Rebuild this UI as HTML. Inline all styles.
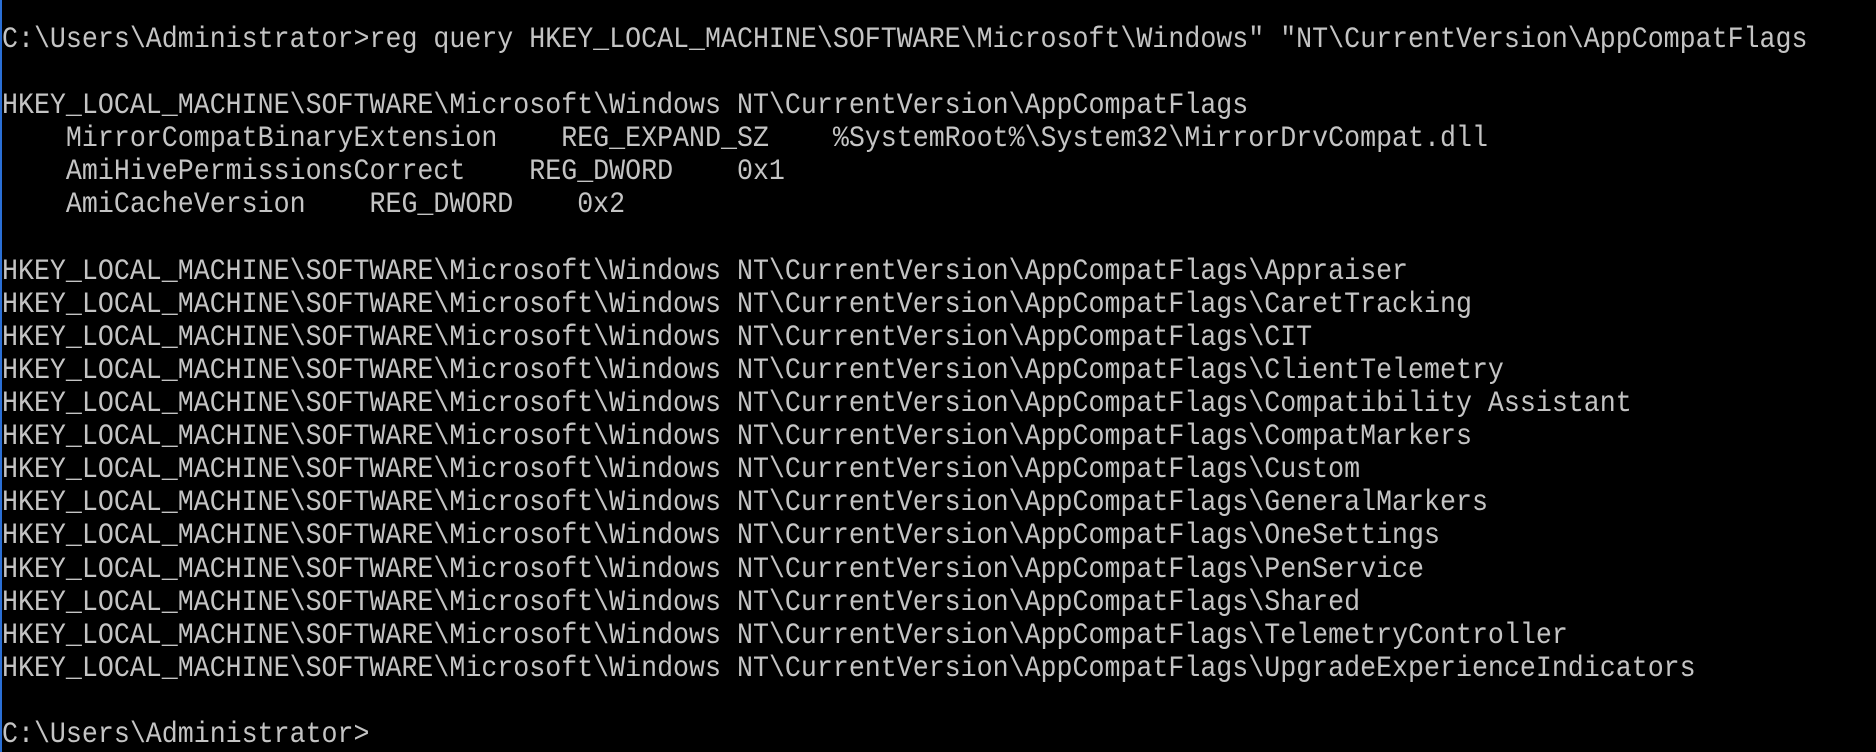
<!DOCTYPE html>
<html><head><meta charset="utf-8"><style>
html,body{margin:0;padding:0;background:#000;width:1876px;height:752px;overflow:hidden}
body{position:relative}
.bar{position:absolute;left:0;top:0;width:2px;height:752px;background:#2a6fd6}
pre{position:absolute;left:2px;top:24px;margin:0;font-family:"Liberation Mono",monospace;font-size:30px;letter-spacing:0;line-height:33.1px;color:#c4c4c4;white-space:pre;transform:scaleX(0.8875);transform-origin:0 0}
</style></head><body><div class="bar"></div><pre>C:\Users\Administrator>reg query HKEY_LOCAL_MACHINE\SOFTWARE\Microsoft\Windows" "NT\CurrentVersion\AppCompatFlags

HKEY_LOCAL_MACHINE\SOFTWARE\Microsoft\Windows NT\CurrentVersion\AppCompatFlags
    MirrorCompatBinaryExtension    REG_EXPAND_SZ    %SystemRoot%\System32\MirrorDrvCompat.dll
    AmiHivePermissionsCorrect    REG_DWORD    0x1
    AmiCacheVersion    REG_DWORD    0x2

HKEY_LOCAL_MACHINE\SOFTWARE\Microsoft\Windows NT\CurrentVersion\AppCompatFlags\Appraiser
HKEY_LOCAL_MACHINE\SOFTWARE\Microsoft\Windows NT\CurrentVersion\AppCompatFlags\CaretTracking
HKEY_LOCAL_MACHINE\SOFTWARE\Microsoft\Windows NT\CurrentVersion\AppCompatFlags\CIT
HKEY_LOCAL_MACHINE\SOFTWARE\Microsoft\Windows NT\CurrentVersion\AppCompatFlags\ClientTelemetry
HKEY_LOCAL_MACHINE\SOFTWARE\Microsoft\Windows NT\CurrentVersion\AppCompatFlags\Compatibility Assistant
HKEY_LOCAL_MACHINE\SOFTWARE\Microsoft\Windows NT\CurrentVersion\AppCompatFlags\CompatMarkers
HKEY_LOCAL_MACHINE\SOFTWARE\Microsoft\Windows NT\CurrentVersion\AppCompatFlags\Custom
HKEY_LOCAL_MACHINE\SOFTWARE\Microsoft\Windows NT\CurrentVersion\AppCompatFlags\GeneralMarkers
HKEY_LOCAL_MACHINE\SOFTWARE\Microsoft\Windows NT\CurrentVersion\AppCompatFlags\OneSettings
HKEY_LOCAL_MACHINE\SOFTWARE\Microsoft\Windows NT\CurrentVersion\AppCompatFlags\PenService
HKEY_LOCAL_MACHINE\SOFTWARE\Microsoft\Windows NT\CurrentVersion\AppCompatFlags\Shared
HKEY_LOCAL_MACHINE\SOFTWARE\Microsoft\Windows NT\CurrentVersion\AppCompatFlags\TelemetryController
HKEY_LOCAL_MACHINE\SOFTWARE\Microsoft\Windows NT\CurrentVersion\AppCompatFlags\UpgradeExperienceIndicators

C:\Users\Administrator></pre></body></html>
